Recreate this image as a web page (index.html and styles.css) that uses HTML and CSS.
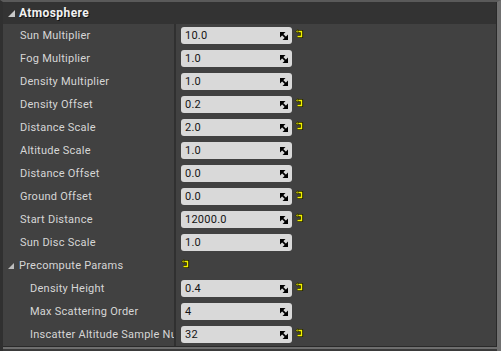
FILE: index.html
```html
<!DOCTYPE html>
<html>
<head>
<meta charset="utf-8">
<title>Atmosphere</title>
<link rel="stylesheet" href="styles.css">
</head>
<body>
<div class="panel">
  <div class="header">
    <span class="tri"></span><span class="title">Atmosphere</span>
  </div>
  <div class="rows">
    <div class="row"><div class="name">Sun Multiplier</div><div class="val"><div class="box"><span>10.0</span><svg class="spin" width="8" height="8" viewBox="0 0 8 8"><polygon points="0,0 5.5,0 0,5.5"/><polygon points="8,2.5 8,8 2.5,8"/><path d="M0 0 L8 8" stroke="#000" stroke-width="1.8"/></svg></div><svg class="reset" width="9" height="10" viewBox="0 0 9 10"><path d="M2 2.5 H6.5 V7.5 H2.5" fill="none" stroke="#202000" stroke-width="3.2"/><path d="M2 2.5 H6.5 V7.5 H2.5" fill="none" stroke="#f2f200" stroke-width="1.4"/><path d="M0.6 2.5 L3 0.6 V4.4 Z" fill="#f2f200" stroke="#202000" stroke-width="0.8"/></svg></div></div>
    <div class="row"><div class="name">Fog Multiplier</div><div class="val"><div class="box"><span>1.0</span><svg class="spin" width="8" height="8" viewBox="0 0 8 8"><polygon points="0,0 5.5,0 0,5.5"/><polygon points="8,2.5 8,8 2.5,8"/><path d="M0 0 L8 8" stroke="#000" stroke-width="1.8"/></svg></div></div></div>
    <div class="row"><div class="name">Density Multiplier</div><div class="val"><div class="box"><span>1.0</span><svg class="spin" width="8" height="8" viewBox="0 0 8 8"><polygon points="0,0 5.5,0 0,5.5"/><polygon points="8,2.5 8,8 2.5,8"/><path d="M0 0 L8 8" stroke="#000" stroke-width="1.8"/></svg></div></div></div>
    <div class="row"><div class="name">Density Offset</div><div class="val"><div class="box"><span>0.2</span><svg class="spin" width="8" height="8" viewBox="0 0 8 8"><polygon points="0,0 5.5,0 0,5.5"/><polygon points="8,2.5 8,8 2.5,8"/><path d="M0 0 L8 8" stroke="#000" stroke-width="1.8"/></svg></div><svg class="reset" width="9" height="10" viewBox="0 0 9 10"><path d="M2 2.5 H6.5 V7.5 H2.5" fill="none" stroke="#202000" stroke-width="3.2"/><path d="M2 2.5 H6.5 V7.5 H2.5" fill="none" stroke="#f2f200" stroke-width="1.4"/><path d="M0.6 2.5 L3 0.6 V4.4 Z" fill="#f2f200" stroke="#202000" stroke-width="0.8"/></svg></div></div>
    <div class="row"><div class="name">Distance Scale</div><div class="val"><div class="box"><span>2.0</span><svg class="spin" width="8" height="8" viewBox="0 0 8 8"><polygon points="0,0 5.5,0 0,5.5"/><polygon points="8,2.5 8,8 2.5,8"/><path d="M0 0 L8 8" stroke="#000" stroke-width="1.8"/></svg></div><svg class="reset" width="9" height="10" viewBox="0 0 9 10"><path d="M2 2.5 H6.5 V7.5 H2.5" fill="none" stroke="#202000" stroke-width="3.2"/><path d="M2 2.5 H6.5 V7.5 H2.5" fill="none" stroke="#f2f200" stroke-width="1.4"/><path d="M0.6 2.5 L3 0.6 V4.4 Z" fill="#f2f200" stroke="#202000" stroke-width="0.8"/></svg></div></div>
    <div class="row"><div class="name">Altitude Scale</div><div class="val"><div class="box"><span>1.0</span><svg class="spin" width="8" height="8" viewBox="0 0 8 8"><polygon points="0,0 5.5,0 0,5.5"/><polygon points="8,2.5 8,8 2.5,8"/><path d="M0 0 L8 8" stroke="#000" stroke-width="1.8"/></svg></div></div></div>
    <div class="row"><div class="name">Distance Offset</div><div class="val"><div class="box"><span>0.0</span><svg class="spin" width="8" height="8" viewBox="0 0 8 8"><polygon points="0,0 5.5,0 0,5.5"/><polygon points="8,2.5 8,8 2.5,8"/><path d="M0 0 L8 8" stroke="#000" stroke-width="1.8"/></svg></div></div></div>
    <div class="row"><div class="name">Ground Offset</div><div class="val"><div class="box"><span>0.0</span><svg class="spin" width="8" height="8" viewBox="0 0 8 8"><polygon points="0,0 5.5,0 0,5.5"/><polygon points="8,2.5 8,8 2.5,8"/><path d="M0 0 L8 8" stroke="#000" stroke-width="1.8"/></svg></div><svg class="reset" width="9" height="10" viewBox="0 0 9 10"><path d="M2 2.5 H6.5 V7.5 H2.5" fill="none" stroke="#202000" stroke-width="3.2"/><path d="M2 2.5 H6.5 V7.5 H2.5" fill="none" stroke="#f2f200" stroke-width="1.4"/><path d="M0.6 2.5 L3 0.6 V4.4 Z" fill="#f2f200" stroke="#202000" stroke-width="0.8"/></svg></div></div>
    <div class="row"><div class="name">Start Distance</div><div class="val"><div class="box"><span>12000.0</span><svg class="spin" width="8" height="8" viewBox="0 0 8 8"><polygon points="0,0 5.5,0 0,5.5"/><polygon points="8,2.5 8,8 2.5,8"/><path d="M0 0 L8 8" stroke="#000" stroke-width="1.8"/></svg></div><svg class="reset" width="9" height="10" viewBox="0 0 9 10"><path d="M2 2.5 H6.5 V7.5 H2.5" fill="none" stroke="#202000" stroke-width="3.2"/><path d="M2 2.5 H6.5 V7.5 H2.5" fill="none" stroke="#f2f200" stroke-width="1.4"/><path d="M0.6 2.5 L3 0.6 V4.4 Z" fill="#f2f200" stroke="#202000" stroke-width="0.8"/></svg></div></div>
    <div class="row"><div class="name">Sun Disc Scale</div><div class="val"><div class="box"><span>1.0</span><svg class="spin" width="8" height="8" viewBox="0 0 8 8"><polygon points="0,0 5.5,0 0,5.5"/><polygon points="8,2.5 8,8 2.5,8"/><path d="M0 0 L8 8" stroke="#000" stroke-width="1.8"/></svg></div></div></div>
    <div class="row"><div class="name group"><span class="tri small"></span>Precompute Params</div><div class="val"><svg class="reset" width="9" height="10" viewBox="0 0 9 10"><path d="M2 2.5 H6.5 V7.5 H2.5" fill="none" stroke="#202000" stroke-width="3.2"/><path d="M2 2.5 H6.5 V7.5 H2.5" fill="none" stroke="#f2f200" stroke-width="1.4"/><path d="M0.6 2.5 L3 0.6 V4.4 Z" fill="#f2f200" stroke="#202000" stroke-width="0.8"/></svg></div></div>
    <div class="row"><div class="name sub">Density Height</div><div class="val"><div class="box"><span>0.4</span><svg class="spin" width="8" height="8" viewBox="0 0 8 8"><polygon points="0,0 5.5,0 0,5.5"/><polygon points="8,2.5 8,8 2.5,8"/><path d="M0 0 L8 8" stroke="#000" stroke-width="1.8"/></svg></div><svg class="reset" width="9" height="10" viewBox="0 0 9 10"><path d="M2 2.5 H6.5 V7.5 H2.5" fill="none" stroke="#202000" stroke-width="3.2"/><path d="M2 2.5 H6.5 V7.5 H2.5" fill="none" stroke="#f2f200" stroke-width="1.4"/><path d="M0.6 2.5 L3 0.6 V4.4 Z" fill="#f2f200" stroke="#202000" stroke-width="0.8"/></svg></div></div>
    <div class="row"><div class="name sub">Max Scattering Order</div><div class="val"><div class="box"><span>4</span><svg class="spin" width="8" height="8" viewBox="0 0 8 8"><polygon points="0,0 5.5,0 0,5.5"/><polygon points="8,2.5 8,8 2.5,8"/><path d="M0 0 L8 8" stroke="#000" stroke-width="1.8"/></svg></div></div></div>
    <div class="row"><div class="name sub">Inscatter Altitude Sample Nu</div><div class="val"><div class="box"><span>32</span><svg class="spin" width="8" height="8" viewBox="0 0 8 8"><polygon points="0,0 5.5,0 0,5.5"/><polygon points="8,2.5 8,8 2.5,8"/><path d="M0 0 L8 8" stroke="#000" stroke-width="1.8"/></svg></div><svg class="reset" width="9" height="10" viewBox="0 0 9 10"><path d="M2 2.5 H6.5 V7.5 H2.5" fill="none" stroke="#202000" stroke-width="3.2"/><path d="M2 2.5 H6.5 V7.5 H2.5" fill="none" stroke="#f2f200" stroke-width="1.4"/><path d="M0.6 2.5 L3 0.6 V4.4 Z" fill="#f2f200" stroke="#202000" stroke-width="0.8"/></svg></div></div>
  </div>
  <div class="foot"></div>
</div>
</body>
</html>
```

FILE: styles.css
```css
body { margin: 0; background-color: #3c3c3c; }
.panel
{
  width: 501px; height: 351px; box-sizing: border-box;
  display: flex; flex-direction: column;
  background-color: #414141;
  border-top: 2px solid #5a5a5a;
  border-left: 3px solid #303030;
  border-right: 4px solid #707070;
  font-family: Roboto, "Liberation Sans", sans-serif;
  font-size: 11px; color: #d6d6d6;
  letter-spacing: 0.25px;
  overflow: hidden;
}
.header
{
  height: 22px; flex: none;
  display: flex; align-items: center;
  background-color: #333333;
  border-right: 1px solid #2a2a2a;
}
.title
{
  font-weight: bold; font-size: 12px; color: #f2f2f2;
  letter-spacing: 0.4px;
  text-shadow: 1px 1px 0 #111;
}
.tri
{
  width: 0; height: 0; margin: 0 4px 0 5px;
  border-left: 7px solid transparent;
  border-bottom: 7px solid #c8c8c8;
}
.tri.small
{
  margin: 0 5px 0 -12px;
  border-left-width: 6px; border-bottom-width: 6px;
  border-bottom-color: #bdbdbd;
}
.rows { flex: none; border-right: 1px solid #2a2a2a; }
.row { display: flex; height: 23px; }
.name
{
  width: 154px; flex: none; padding-left: 17px;
  display: flex; align-items: center;
  white-space: nowrap; overflow: hidden;
  border-right: 2px solid #303030;
}
.name.sub { width: 144px; padding-left: 27px; }
.val { flex: 1; display: flex; align-items: center; padding-left: 5px; gap: 3px; }
.box
{
  width: 111px; height: 17px; box-sizing: border-box;
  display: flex; align-items: center; justify-content: space-between;
  padding: 0 4px 0 4px;
  background-color: #d9d9d9; border-radius: 3px;
  color: #141414;
}
.spin { flex: none; }
.reset { flex: none; margin-top: -3px; }
.foot
{
  flex: 1;
  border-top: 1px solid #2a2a2a;
  background: linear-gradient(#6e6e6e 0 2px, #3a3a3a 2px);
}
```
